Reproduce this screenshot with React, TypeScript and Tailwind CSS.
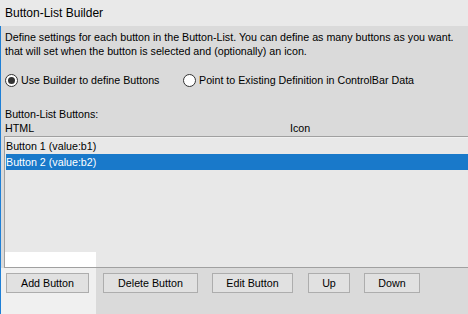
import React from "react";

const font = { fontFamily: '"Liberation Sans", Arial, sans-serif' };

function Radio({ checked, label }: { checked: boolean; label: string }) {
  return (
    <div className="flex items-center h-[14px]">
      <div className="w-[13px] h-[13px] rounded-full border border-[#333333] bg-white flex items-center justify-center">
        {checked && <div className="w-[7px] h-[7px] rounded-full bg-[#333333]" />}
      </div>
      <span className="ml-[3px] leading-[14px]">{label}</span>
    </div>
  );
}

function Btn({ label, w }: { label: string; w: string }) {
  return (
    <div
      className={`${w} h-[20px] border border-[#adadad] bg-[#e1e1e1] flex items-center justify-center leading-[14px] text-black`}
    >
      {label}
    </div>
  );
}

export default function App() {
  return (
    <div className="w-[468px] h-[314px] overflow-hidden text-[10.7px] text-black flex flex-col" style={font}>
      <div className="h-[26px] bg-[#e9e9e9] flex items-center pl-[5px] leading-[14px] text-[12px] shrink-0">
        Button-List Builder
      </div>
      <div className="flex-1 flex flex-col bg-[#dadada] border-l border-[#1e7fd6]">
        <div className="pt-[4px] pl-[4px] leading-[14px] whitespace-nowrap">
          <div>Define settings for each button in the Button-List. You can define as many buttons as you want.</div>
          <div>that will set when the button is selected and (optionally) an icon.</div>
        </div>
        <div className="mt-[15px] pl-[4px] flex">
          <div className="w-[178px]">
            <Radio checked label="Use Builder to define Buttons" />
          </div>
          <Radio checked={false} label="Point to Existing Definition in ControlBar Data" />
        </div>
        <div className="mt-[20px] pl-[4px] leading-[14px]">Button-List Buttons:</div>
        <div className="pl-[4px] flex leading-[14px] h-[15px]">
          <div className="w-[285px]">HTML</div>
          <div>Icon</div>
        </div>
        <div className="ml-[3px] h-[132px] border-t border-t-[#a0a0a0] border-l border-l-[#a0a0a0] border-b border-b-[#a0a0a0] bg-[#e8e8e8] flex flex-col">
          <div className="h-[1px] bg-[#f0f0f0]" />
          <div className="h-[16px] pl-[1px] leading-[14px] pt-[1px]">Button 1 (value:b1)</div>
          <div className="h-[16px] ml-[1px] pl-0 leading-[14px] pt-[1px] bg-[#1979ca] text-white">Button 2 (value:b2)</div>
          <div className="flex-1" />
          <div className="h-[15px] w-[91px] bg-white" />
        </div>
        <div className="flex-1 flex">
          <div className="w-[95px] bg-[#f0f0f0] pt-[5px] pl-[5px]">
            <Btn label="Add Button" w="w-[83px]" />
          </div>
          <div className="flex pt-[5px] pl-[7px]">
            <Btn label="Delete Button" w="w-[95px]" />
            <div className="w-[14px]" />
            <Btn label="Edit Button" w="w-[81px]" />
            <div className="w-[15px]" />
            <Btn label="Up" w="w-[42px]" />
            <div className="w-[14px]" />
            <Btn label="Down" w="w-[56px]" />
          </div>
        </div>
      </div>
    </div>
  );
}
